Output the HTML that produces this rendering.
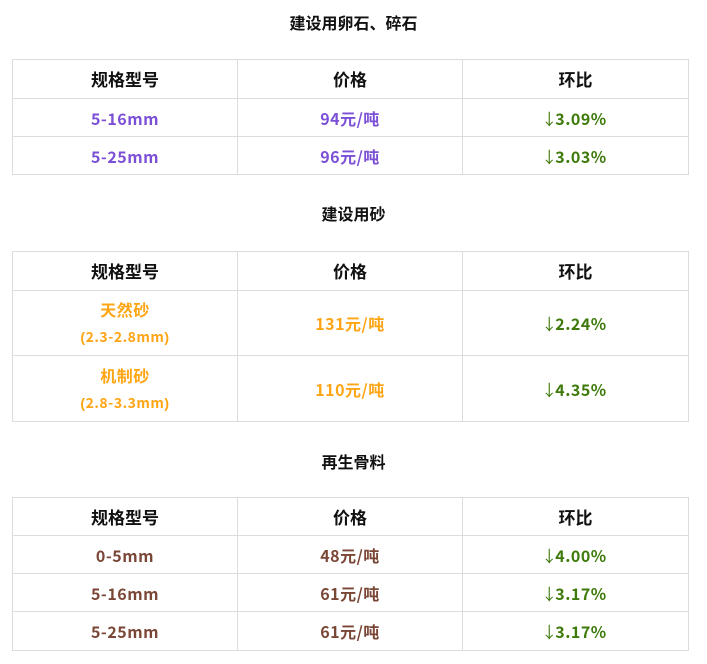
<!DOCTYPE html>
<html><head><meta charset="utf-8"><style>
body{margin:0;width:707px;height:664px;background:#fff;position:relative;overflow:hidden;font-family:"Noto Sans CJK SC",sans-serif;font-weight:bold;font-size:16px}
.t{position:absolute;left:0;width:707px;text-align:center;color:#111;font-size:16px;line-height:22px}
table{position:absolute;left:12px;width:677px;border-collapse:collapse;table-layout:fixed}
td{border:1px solid #dcdcdc;text-align:center;padding:0;vertical-align:middle;line-height:20px;letter-spacing:0.5px}
td.h{color:#111;letter-spacing:0;font-size:17px}
.p{color:#7b4fd6}.o{color:#ffa514}.g{color:#3d7a0a}.b{color:#7a4636}
.s{font-size:14px;display:block;margin-top:8px}
.a{font-weight:normal;letter-spacing:0;display:inline-block;width:10px;margin-right:1px;text-indent:-3px;overflow:visible;white-space:nowrap}
.q{font-family:"Liberation Sans",sans-serif}
</style></head><body>
<div class="t" style="top:11px">建设用卵石、碎石</div>
<table style="top:59px"><colgroup><col style="width:225px"><col style="width:225px"><col></colgroup>
<tr style="height:39px"><td class="h">规格型号</td><td class="h">价格</td><td class="h">环比</td></tr>
<tr style="height:38px"><td class="p">5-16mm</td><td class="p">94元/吨</td><td class="g"><span class="a">↓</span>3.09%</td></tr>
<tr style="height:38px"><td class="p">5-25mm</td><td class="p">96元/吨</td><td class="g"><span class="a">↓</span>3.03%</td></tr>
</table>
<div class="t" style="top:202px">建设用砂</div>
<table style="top:251px"><colgroup><col style="width:225px"><col style="width:225px"><col></colgroup>
<tr style="height:39px"><td class="h">规格型号</td><td class="h">价格</td><td class="h">环比</td></tr>
<tr style="height:65px"><td class="o">天然砂<span class="s"><span class="q">(</span>2.3-2.8mm<span class="q">)</span></span></td><td class="o">131元/吨</td><td class="g"><span class="a">↓</span>2.24%</td></tr>
<tr style="height:66px"><td class="o">机制砂<span class="s"><span class="q">(</span>2.8-3.3mm<span class="q">)</span></span></td><td class="o">110元/吨</td><td class="g"><span class="a">↓</span>4.35%</td></tr>
</table>
<div class="t" style="top:450px">再生骨料</div>
<table style="top:497px"><colgroup><col style="width:225px"><col style="width:225px"><col></colgroup>
<tr style="height:38px"><td class="h">规格型号</td><td class="h">价格</td><td class="h">环比</td></tr>
<tr style="height:38px"><td class="b">0-5mm</td><td class="b">48元/吨</td><td class="g"><span class="a">↓</span>4.00%</td></tr>
<tr style="height:38px"><td class="b">5-16mm</td><td class="b">61元/吨</td><td class="g"><span class="a">↓</span>3.17%</td></tr>
<tr style="height:39px"><td class="b">5-25mm</td><td class="b">61元/吨</td><td class="g"><span class="a">↓</span>3.17%</td></tr>
</table>
</body></html>
